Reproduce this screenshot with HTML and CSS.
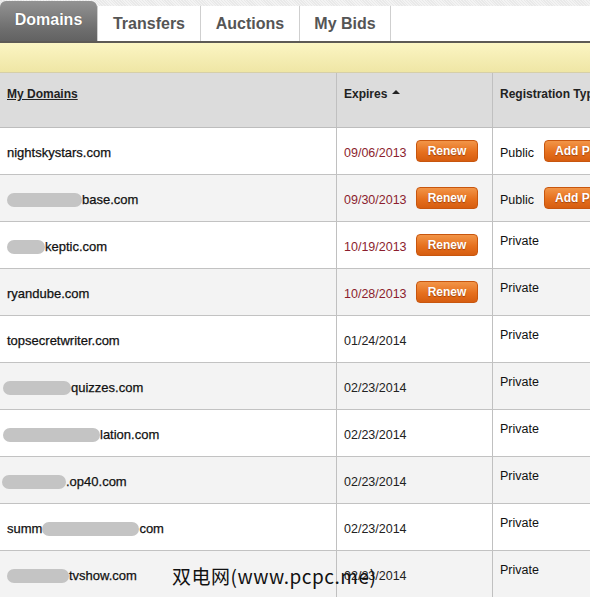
FILE: index.html
```html
<!DOCTYPE html>
<html>
<head>
<meta charset="utf-8">
<link rel="stylesheet" href="styles.css">
</head>
<body>
<div class="page">
  <div class="tabs">
    <div class="tab active">Domains</div>
    <div class="tab t-transfers">Transfers</div>
    <div class="tab t-auctions">Auctions</div>
    <div class="tab t-bids">My Bids</div>
    <div class="tab-fill"></div>
  </div>
  <div class="notice"></div>
  <div class="grid">
    <div class="row head">
      <div class="cell c1"><span class="sort-link">My Domains</span></div>
      <div class="cell c2">Expires <span class="arrow"></span></div>
      <div class="cell c3">Registration Type</div>
    </div>

    <div class="row">
      <div class="cell c1 mid"><span class="dom">nightskystars.com</span></div>
      <div class="cell c2 mid"><span class="date red">09/06/2013</span><span class="btn">Renew</span></div>
      <div class="cell c3 mid"><span class="reg">Public</span><span class="btn add">Add Privacy</span></div>
    </div>
    <div class="row alt">
      <div class="cell c1 mid"><span class="blur" style="width:75px"></span><span class="dom">base.com</span></div>
      <div class="cell c2 mid"><span class="date red">09/30/2013</span><span class="btn">Renew</span></div>
      <div class="cell c3 mid"><span class="reg">Public</span><span class="btn add">Add Privacy</span></div>
    </div>
    <div class="row">
      <div class="cell c1 mid"><span class="blur" style="width:38px"></span><span class="dom">keptic.com</span></div>
      <div class="cell c2 mid"><span class="date red">10/19/2013</span><span class="btn">Renew</span></div>
      <div class="cell c3 top"><span class="reg">Private</span></div>
    </div>
    <div class="row alt">
      <div class="cell c1 mid"><span class="dom">ryandube.com</span></div>
      <div class="cell c2 mid"><span class="date red">10/28/2013</span><span class="btn">Renew</span></div>
      <div class="cell c3 top"><span class="reg">Private</span></div>
    </div>
    <div class="row">
      <div class="cell c1 mid"><span class="dom">topsecretwriter.com</span></div>
      <div class="cell c2 mid"><span class="date">01/24/2014</span></div>
      <div class="cell c3 top"><span class="reg">Private</span></div>
    </div>
    <div class="row alt">
      <div class="cell c1 mid shift"><span class="blur" style="width:68px"></span><span class="dom">quizzes.com</span></div>
      <div class="cell c2 mid"><span class="date">02/23/2014</span></div>
      <div class="cell c3 top"><span class="reg">Private</span></div>
    </div>
    <div class="row">
      <div class="cell c1 mid shift"><span class="blur" style="width:97px"></span><span class="dom">lation.com</span></div>
      <div class="cell c2 mid"><span class="date">02/23/2014</span></div>
      <div class="cell c3 top"><span class="reg">Private</span></div>
    </div>
    <div class="row alt">
      <div class="cell c1 mid shift2"><span class="blur" style="width:64px"></span><span class="dom">.op40.com</span></div>
      <div class="cell c2 mid"><span class="date">02/23/2014</span></div>
      <div class="cell c3 top"><span class="reg">Private</span></div>
    </div>
    <div class="row">
      <div class="cell c1 mid"><span class="dom">summ</span><span class="blur mid-blur" style="width:97px"></span><span class="dom">com</span></div>
      <div class="cell c2 mid"><span class="date">02/23/2014</span></div>
      <div class="cell c3 top"><span class="reg">Private</span></div>
    </div>
    <div class="row alt">
      <div class="cell c1 mid"><span class="blur" style="width:62px"></span><span class="dom">tvshow.com</span></div>
      <div class="cell c2 mid"><span class="date">02/23/2014</span></div>
      <div class="cell c3 top"><span class="reg">Private</span></div>
    </div>
  </div>
  <div class="watermark">双电网(www.pcpc.me)</div>
</div>
</body>
</html>
```

FILE: styles.css
```css
html, body {
  margin: 0;
  padding: 0;
  background: #fff;
}
.page {
  position: relative;
  width: 590px;
  height: 597px;
  overflow: hidden;
  font-family: "Liberation Sans", Arial, sans-serif;
  background: repeating-linear-gradient(45deg, #e9e9e9 0 1px, #f3f3f3 1px 2px);
}
.tabs {
  display: flex;
  height: 41px;
  border-bottom: 2px solid #5d5a55;
}
.tab {
  box-sizing: border-box;
  margin-top: 6px;
  background: #fff;
  border-left: 1px solid #cfcfcf;
  color: #555;
  font-weight: bold;
  font-size: 16px;
  display: flex;
  align-items: center;
  justify-content: center;
  padding-bottom: 0;
}
.tab.active {
  margin-top: 1px;
  width: 97px;
  border: none;
  border-radius: 6px 6px 0 0;
  background: linear-gradient(#939393, #6e6e6e 70%, #626262);
  color: #fff;
  padding-bottom: 2px;
  text-shadow: 0 0 1px rgba(0,0,0,0.4);
}
.t-transfers { width: 103px; }
.t-auctions { width: 99px; }
.t-bids { width: 92px; border-right: 1px solid #cfcfcf; }
.tab-fill {
  flex: 1;
  margin-top: 6px;
  background: #fff;
}
.notice {
  height: 29px;
  background: linear-gradient(#fbf5c3, #efe6a5);
  border-bottom: 1px solid #d6cfa8;
}
.grid {
  width: 700px;
}
.row {
  display: grid;
  grid-template-columns: 337px 156px 207px;
  height: 47px;
  box-sizing: border-box;
  border-bottom: 1px solid #c2c2c2;
  background: #fff;
}
.row.alt { background: #f3f3f3; }
.row.head {
  height: 55px;
  background: #dcdcdc;
  border-bottom: 1px solid #bdbdbd;
}
.cell {
  box-sizing: border-box;
  border-right: 1px solid #c0c0c0;
  padding-left: 7px;
  font-size: 12px;
  color: #111;
  display: flex;
  align-items: center;
  white-space: nowrap;
}
.cell.c3 { border-right: none; }
.head .cell {
  align-items: flex-start;
  padding-top: 14px;
  font-weight: bold;
  color: #222;
}
.sort-link { text-decoration: underline; }
.arrow {
  display: inline-block;
  width: 0;
  height: 0;
  margin-left: 5px;
  margin-top: 3px;
  border-left: 4px solid transparent;
  border-right: 4px solid transparent;
  border-bottom: 4px solid #222;
  vertical-align: top;
}
.cell.top {
  align-items: flex-start;
  padding-top: 12px;
}
.cell.mid { padding-top: 3px; }
.dom {
  font-size: 13px;
  color: #111;
  -webkit-text-stroke: 0.25px #111;
}
.blur {
  display: inline-block;
  height: 14px;
  border-radius: 7px;
  background: #c4c4c4;
}
.shift { padding-left: 3px; }
.shift2 { padding-left: 2px; }
.date {
  font-size: 12.5px;
  color: #222;
  width: 72px;
}
.date.red { color: #8c1e2e; }
.btn {
  display: inline-flex;
  align-items: center;
  justify-content: center;
  height: 22px;
  width: 62px;
  box-sizing: border-box;
  border-radius: 4px;
  background: linear-gradient(#f29548, #e6701e 55%, #d65d10);
  border: 1px solid #c8560e;
  color: #fff;
  font-weight: bold;
  font-size: 12px;
  text-shadow: 0 1px 1px rgba(120,40,0,0.6);
  margin-top: -4px;
}
.btn.add {
  width: 90px;
  justify-content: flex-start;
  padding-left: 10px;
}
.reg {
  font-size: 12.5px;
  color: #111;
  width: 44px;
}
.c3.top .reg { width: auto; }
.watermark {
  position: absolute;
  left: 172px;
  top: 562px;
  font-family: "Noto Sans CJK SC", "DejaVu Sans", sans-serif;
  font-size: 19px;
  color: #111;
  letter-spacing: 0.5px;
}
```
